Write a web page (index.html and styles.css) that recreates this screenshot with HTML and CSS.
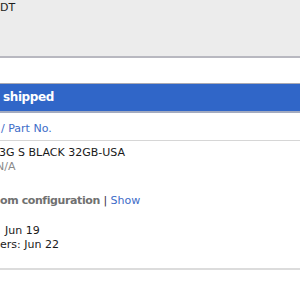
FILE: index.html
```html
<!DOCTYPE html>
<html>
<head>
<meta charset="utf-8">
<link rel="stylesheet" href="styles.css">
</head>
<body>
<div class="page">
  <header class="topbar"><span class="tz">DT</span></header>
  <div class="band"></div>
  <div class="status">shipped</div>
  <div class="colhead"><span class="link slash">/ Part No.</span></div>
  <div class="item">
    <div class="name">3G S BLACK 32GB-USA</div>
    <div class="sub">N/A</div>
    <div class="config"><span class="cfg">om configuration</span> <span class="sep">|</span> <span class="link">Show</span></div>
    <div class="dates">
      <div class="d1">Jun 19</div>
      <div>ers: Jun 22</div>
    </div>
  </div>
  <div class="rule"></div>
</div>
</body>
</html>
```
FILE: styles.css
```css
html, body {
  margin: 0;
  padding: 0;
  background: #ffffff;
  overflow: hidden;
}
.page {
  width: 300px;
  height: 300px;
  overflow: hidden;
  font-family: "DejaVu Sans", "Liberation Sans", sans-serif;
  font-size: 11px;
  line-height: 14px;
  color: #1a1a1a;
}
.topbar {
  height: 55px;
  padding-top: 1px;
  background: #ececec;
  border-bottom: 2px solid #b8b8c0;
  box-sizing: content-box;
}
.tz {
  display: block;
  color: #1e1e1e;
}
.band {
  height: 25px;
  background: #ffffff;
  border-bottom: 1px solid #a9a9b3;
}
.status {
  height: 27px;
  background: #3066c8;
  color: #ffffff;
  font-weight: bold;
  font-size: 12px;
  line-height: 27px;
  letter-spacing: -0.4px;
  padding-left: 3px;
  border-bottom: 2px solid #a3abc0;
}
.colhead {
  height: 23px;
  padding-top: 4px;
  line-height: 23px;
  border-bottom: 1px solid #d6d6d6;
}
.link {
  color: #3d6cc8;
}
.slash {
  margin-left: 1px;
}
.item {
  padding-top: 5px;
  padding-bottom: 16px;
}
.name {
  margin-left: -1px;
}
.sub {
  margin-left: -4px;
  color: #8a8a8a;
}
.config {
  margin-top: 20px;
}
.cfg {
  color: #707070;
  font-weight: bold;
  letter-spacing: -0.4px;
}
.sep {
  color: #333;
}
.dates {
  margin-top: 16px;
}
.d1 {
  padding-left: 5px;
}
.rule {
  height: 0;
  border-top: 2px solid #dcdcdc;
}
```
